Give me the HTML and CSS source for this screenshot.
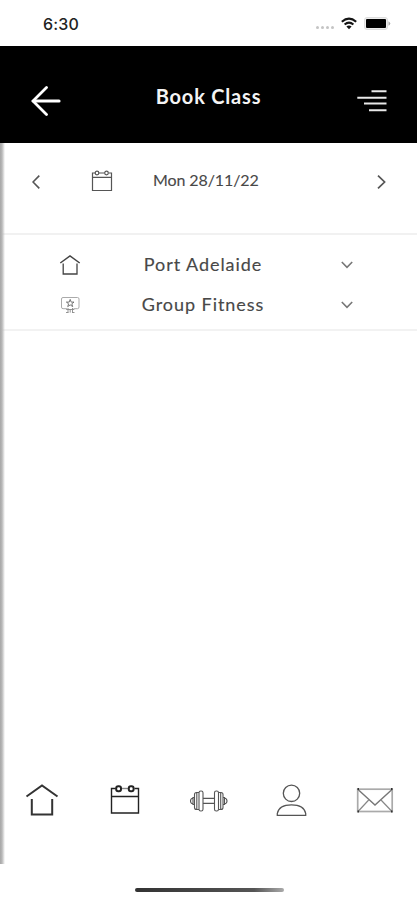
FILE: index.html
```html
<!DOCTYPE html>
<html lang="en">
<head>
<meta charset="utf-8">
<title>Book Class</title>
<link rel="stylesheet" href="styles.css">
</head>
<body>
<div class="app">
  <div class="status">
    <span class="clock">6:30</span>
    <div class="signals">
      <span class="dots"><i></i><i></i><i></i><i></i></span>
      <svg class="wifi" width="16" height="13" viewBox="0 0 16 13" fill="none" stroke="#151515" stroke-width="2.1"><path d="M.8 4.7Q8-1.3 15.2 4.7M3.6 7.5Q8 3.8 12.4 7.5"/><path d="M5.4 9.4Q8 7.5 10.6 9.4L8 12.2Z" fill="#151515" stroke="none"/></svg>
      <svg width="27" height="13" viewBox="0 0 27 13"><rect x=".5" y=".5" width="23" height="12" rx="2.5" fill="#eee" stroke="#ddd"/><rect x="2" y="2" width="20" height="9" rx="1" fill="#000"/><path d="M24.5 4.2Q28 6.5 24.5 8.8Z" fill="#aaa"/></svg>
    </div>
  </div>
  <header class="header">
    <svg width="30" height="30" viewBox="0 0 30 30" fill="none" stroke="#fff" stroke-width="2.8" stroke-linecap="round"><path d="M15.5 1.5L2 15L15.5 28.5"/><path d="M2.5 15H28" stroke-width="3.2"/></svg>
    <h1>Book Class</h1>
    <svg width="30" height="30" viewBox="0 0 30 30" stroke="#e8e8e8" stroke-width="2.1"><path d="M14.5 5.2H29.5M.3 11.8H29.5M7 17.5H29.5M12 24.2H29.5"/></svg>
  </header>
  <main class="content">
    <section class="date-row">
      <svg width="8" height="14" viewBox="0 0 8 14" fill="none" stroke="#555" stroke-width="1.6"><path d="M7.3 .6L1 7L7.3 13.4"/></svg>
      <svg width="22" height="22" viewBox="0 0 22 22" fill="none" stroke="#555" stroke-width="1.2"><path d="M4 3H1.5V20.5H20.5V3H17.7M8 3H13.5M1.5 7.4H20.5"/><circle cx="6" cy="3" r="1.8"/><circle cx="15.5" cy="3" r="1.8"/></svg>
      <span class="date">Mon 28/11/22</span>
      <svg width="9" height="14" viewBox="0 0 9 14" fill="none" stroke="#555" stroke-width="1.7"><path d="M1 .6L7.6 7L1 13.4"/></svg>
    </section>
    <section class="filters">
      <div class="filter">
        <svg width="22" height="22" viewBox="0 0 22 22" fill="none" stroke="#444" stroke-width="1.5"><path d="M1.3 9L11 1.9L20.7 9"/><path d="M4.2 9.6V20H18V9.6" stroke-width="1.3"/></svg>
        <span class="place">Port Adelaide</span>
        <svg width="12" height="8" viewBox="0 0 12 8" fill="none" stroke="#777" stroke-width="1.6"><path d="M.8 1L6 6.3L11.2 1"/></svg>
      </div>
      <div class="filter">
        <svg width="22" height="22" viewBox="0 0 22 22" fill="none" stroke="#999"><path d="M8 14.7H4Q2.5 14.7 2.5 13V5Q2.5 3.5 4 3.5H18.5Q20 3.5 20 5V13Q20 14.7 18.5 14.7H14.5" stroke="#aaa"/><path d="M11.2 5.4L12.2 8.1H15L12.8 9.8L13.7 12.6L11.2 10.9L8.7 12.6L9.6 9.8L7.4 8.1H10.2Z" stroke="#666" stroke-width=".9"/><path d="M7.2 15.5H15.3M9 14V18.5M13.5 14V18.5M7 18.5H9.5M13 18.5H15.5M11.2 15V18.6" stroke="#888" stroke-width=".9"/></svg>
        <span class="group">Group Fitness</span>
        <svg width="12" height="8" viewBox="0 0 12 8" fill="none" stroke="#777" stroke-width="1.6"><path d="M.8 1L6 6.3L11.2 1"/></svg>
      </div>
    </section>
  </main>
  <nav class="tabs">
    <svg viewBox="0 0 40 36" fill="none" stroke="#333" stroke-width="2"><path d="M4.5 13.5L20 2.5L35.5 13.5"/><path d="M9.8 16V31.5H30.2V16"/></svg>
    <svg viewBox="0 0 40 36" fill="none" stroke="#222" stroke-width="1.4"><path d="M10.8 5.5H6.5V30H33.5V5.5H29.5M6.5 13.5H33.5"/><path d="M16.5 5.5H23.5" stroke="#888"/><rect x="11.2" y="3.2" width="4.8" height="5" rx="2" stroke-width="2"/><rect x="23.8" y="3.2" width="4.8" height="5" rx="2" stroke-width="2"/></svg>
    <svg viewBox="0 0 40 36" fill="none" stroke="#555" stroke-width="1.1"><rect x="10" y="8" width="4" height="20" rx="1.8"/><rect x="25.5" y="8" width="4" height="20" rx="1.8"/><path d="M10 9.5H7.5Q5.5 9.5 5.5 11.5V24.5Q5.5 26.5 7.5 26.5H10M7.8 10V26M5.5 14.5H4V21.5H5.5M4 15Q1.5 15.5 1.5 18T4 21M29.5 9.5H32Q34 9.5 34 11.5V24.5Q34 26.5 32 26.5H29.5M31.7 10V26M34 14.5H35.5V21.5H34M35.5 15Q38 15.5 38 18T35.5 21"/><path d="M14 15.3H25.5M14 20.4H25.5" stroke-width="1.3"/></svg>
    <svg viewBox="0 0 40 36" fill="none" stroke="#555" stroke-width="1.3"><circle cx="19.5" cy="10.3" r="8.2"/><path d="M5.3 32.3V30.5C6.5 24 12.5 21.8 19.5 21.8S32.5 24 33.7 30.5V32.3Z"/></svg>
    <svg viewBox="0 0 40 36" fill="none" stroke="#888" stroke-width="1.2"><rect x="2.7" y="6.2" width="34.5" height="22.3" stroke="#aaa" stroke-width="1.7"/><path d="M3 6.5L20 22L37 6.5" stroke="#777" stroke-width="1.4"/><path d="M3 28.5L13.7 17M26 17L37 28.5"/><path d="M2.5 6H4M36 6H37.5M2.5 28.5H4M36 28.5H37.5" stroke="#333" stroke-width="2"/></svg>
  </nav>
  <div class="home-bar"></div>
  <div class="edge"></div>
</div>
</body>
</html>
```
FILE: styles.css
```css
* { box-sizing: border-box; }
body { margin: 0; background: #fff; }
svg { display: block; flex: none; }
.app {
  position: relative;
  display: flex;
  flex-direction: column;
  height: 900px;
  overflow: hidden;
  font-family: Lato, "Liberation Sans", sans-serif;
  color: #484848;
}
.status {
  display: flex;
  justify-content: space-between;
  height: 46px;
  padding: 16px 26px 0 43px;
}
.clock {
  font: 500 16px/17px Inter, sans-serif;
  letter-spacing: .2px;
  color: #222;
}
.signals { display: flex; gap: 7px; height: 15px; align-items: center; }
.dots { display: flex; gap: 2px; padding-top: 8px; }
.dots i { width: 3px; height: 3px; border-radius: 50%; background: #c4c4c4; }
.header {
  display: flex;
  align-items: center;
  justify-content: space-between;
  height: 97px;
  padding: 12px 30px 0 31px;
  background: #000;
  color: #f4f4f4;
}
.header h1 {
  margin: 0 1px 10px 0;
  font-size: 20px;
  line-height: 24px;
  font-weight: 700;
  letter-spacing: .8px;
  white-space: nowrap;
}
.content { flex: 1; }
.date-row {
  display: grid;
  grid-template-columns: 59px 62px 1fr 9px;
  height: 92px;
  padding: 27px 31px 0 32px;
  border-bottom: 2px solid #f1f1f1;
  align-items: start;
}
.date-row svg:first-child, .date-row svg:last-child { margin-top: 5px; }
.date {
  font-size: 16px;
  line-height: 20px;
  letter-spacing: -.1px;
  white-space: nowrap;
  -webkit-text-stroke: .1px currentColor;
}
.filters {
  display: grid;
  grid-template-rows: 40px 40px;
  height: 96px;
  padding: 10px 64px 0 59px;
  border-bottom: 2px solid #f2f2f2;
}
.filter {
  display: grid;
  grid-template-columns: 22px 1fr 12px;
  column-gap: 30px;
  align-items: center;
}
.filter span {
  padding: 0 16px 2px 0;
  font-size: 18px;
  line-height: 22px;
  letter-spacing: .95px;
  text-align: center;
  white-space: nowrap;
  -webkit-text-stroke: .15px currentColor;
}
.tabs {
  display: grid;
  grid-template-columns: repeat(5, 40px);
  justify-content: space-between;
  height: 105px;
  padding: 0 22px;
}
.tabs svg { width: 40px; height: 36px; }
.home-bar {
  width: 149px;
  height: 4px;
  margin: 0 0 8px 135px;
  border-radius: 2px;
  background: linear-gradient(90deg, #333, #555 80%, #aaa);
}
.edge {
  position: absolute;
  left: 0;
  top: 143px;
  width: 5px;
  height: 721px;
  background: linear-gradient(90deg, #a6a6a6, #b8b8b8 40%, rgba(255, 255, 255, 0));
}
```
